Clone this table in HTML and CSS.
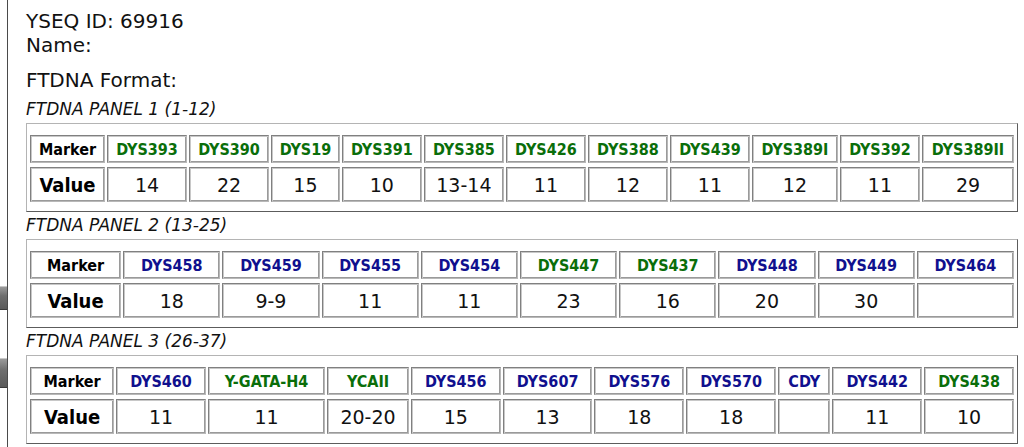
FILE: index.html
```html
<!DOCTYPE html>
<html>
<head>
<meta charset="utf-8">
<title>YSEQ 69916</title>
<link rel="stylesheet" href="styles.css">
</head>
<body>
<div class="frame">
  <div class="rail">
    <span class="knob knob-a"></span>
    <span class="knob knob-b"></span>
  </div>
  <main class="content">
    <div class="info">YSEQ ID: 69916<br>Name:</div>
    <div class="format">FTDNA Format:</div>

    <section class="panel">
      <div class="panel-title">FTDNA PANEL 1 (1-12)</div>
      <div class="panel-box">
        <table class="markers">
          <tr class="head">
            <th class="lbl">Marker</th>
            <th class="g">DYS393</th><th class="g">DYS390</th><th class="g">DYS19</th><th class="g">DYS391</th>
            <th class="g">DYS385</th><th class="g">DYS426</th><th class="g">DYS388</th><th class="g">DYS439</th>
            <th class="g">DYS389I</th><th class="g">DYS392</th><th class="g">DYS389II</th>
          </tr>
          <tr class="vals">
            <th class="lbl">Value</th>
            <td>14</td><td>22</td><td>15</td><td>10</td><td>13-14</td><td>11</td><td>12</td><td>11</td><td>12</td><td>11</td><td>29</td>
          </tr>
        </table>
      </div>
    </section>

    <section class="panel">
      <div class="panel-title">FTDNA PANEL 2 (13-25)</div>
      <div class="panel-box">
        <table class="markers">
          <tr class="head">
            <th class="lbl">Marker</th>
            <th class="b">DYS458</th><th class="b">DYS459</th><th class="b">DYS455</th><th class="b">DYS454</th>
            <th class="g">DYS447</th><th class="g">DYS437</th><th class="b">DYS448</th><th class="b">DYS449</th>
            <th class="b">DYS464</th>
          </tr>
          <tr class="vals">
            <th class="lbl">Value</th>
            <td>18</td><td>9-9</td><td>11</td><td>11</td><td>23</td><td>16</td><td>20</td><td>30</td><td></td>
          </tr>
        </table>
      </div>
    </section>

    <section class="panel">
      <div class="panel-title">FTDNA PANEL 3 (26-37)</div>
      <div class="panel-box">
        <table class="markers">
          <tr class="head">
            <th class="lbl">Marker</th>
            <th class="b">DYS460</th><th class="g">Y-GATA-H4</th><th class="g">YCAII</th><th class="b">DYS456</th>
            <th class="b">DYS607</th><th class="b">DYS576</th><th class="b">DYS570</th><th class="b">CDY</th>
            <th class="b">DYS442</th><th class="g">DYS438</th>
          </tr>
          <tr class="vals">
            <th class="lbl">Value</th>
            <td>11</td><td>11</td><td>20-20</td><td>15</td><td>13</td><td>18</td><td>18</td><td></td><td>11</td><td>10</td>
          </tr>
        </table>
      </div>
    </section>
  </main>
</div>
</body>
</html>
```

FILE: styles.css
```css
html, body {
  margin: 0;
  padding: 0;
  background: #ffffff;
}

body {
  font-family: "DejaVu Sans", Verdana, sans-serif;
  color: #111;
}

.frame {
  display: flex;
  min-height: 447px;
}

.rail {
  width: 7px;
  flex: none;
  display: flex;
  flex-direction: column;
}

.knob {
  display: block;
  width: 7px;
  background: linear-gradient(#9a9a9a, #6e6e6e 40%, #5a5a5a);
  border-top: 1px solid #c8c8c8;
  border-bottom: 1px solid #3a3a3a;
  box-sizing: border-box;
}

.knob-a {
  margin-top: 286px;
  height: 24px;
}

.knob-b {
  margin-top: 48px;
  height: 30px;
}

.content {
  flex: 1;
  border-left: 1px solid #4a4a4a;
  padding: 9px 6px 0 18px;
  min-width: 0;
}

.info {
  font-size: 20px;
  line-height: 24px;
}

.format {
  font-size: 20px;
  line-height: 24px;
  margin-top: 11px;
}

.panel-title {
  font-size: 17px;
  font-style: italic;
  line-height: 20px;
  margin-top: 7px;
  margin-bottom: 4px;
}

.panel + .panel .panel-title {
  margin-top: 3px;
  margin-bottom: 4px;
}

.panel-box {
  border: 1px solid;
  border-color: #b4b4b4 #5c5c5c #5c5c5c #b4b4b4;
  padding: 7px 1px 5px 1px;
}

.markers {
  width: 100%;
  border-collapse: separate;
  border-spacing: 2px 4px;
  text-align: center;
}

.markers th,
.markers td {
  border: 1px solid;
  border-color: #808080 #b8b8b8 #b8b8b8 #808080;
  box-shadow: inset 1px 1px 0 #c8c8c8, inset -1px -1px 0 #9a9a9a;
  padding: 0 4px;
  white-space: nowrap;
}

.head th {
  font-family: "DejaVu Sans Condensed", "DejaVu Sans", sans-serif;
  font-stretch: condensed;
  font-size: 16px;
  font-weight: bold;
  height: 26px;
}

.vals th,
.vals td {
  height: 33px;
}

.vals th {
  font-family: "DejaVu Sans Condensed", "DejaVu Sans", sans-serif;
  font-stretch: condensed;
  font-size: 20px;
  font-weight: bold;
  color: #000;
}

.vals td {
  font-size: 19px;
  font-weight: normal;
  color: #111;
}

.head th.lbl {
  color: #000;
}

.g {
  color: #0a6e0a;
}

.b {
  color: #10108e;
}
```
